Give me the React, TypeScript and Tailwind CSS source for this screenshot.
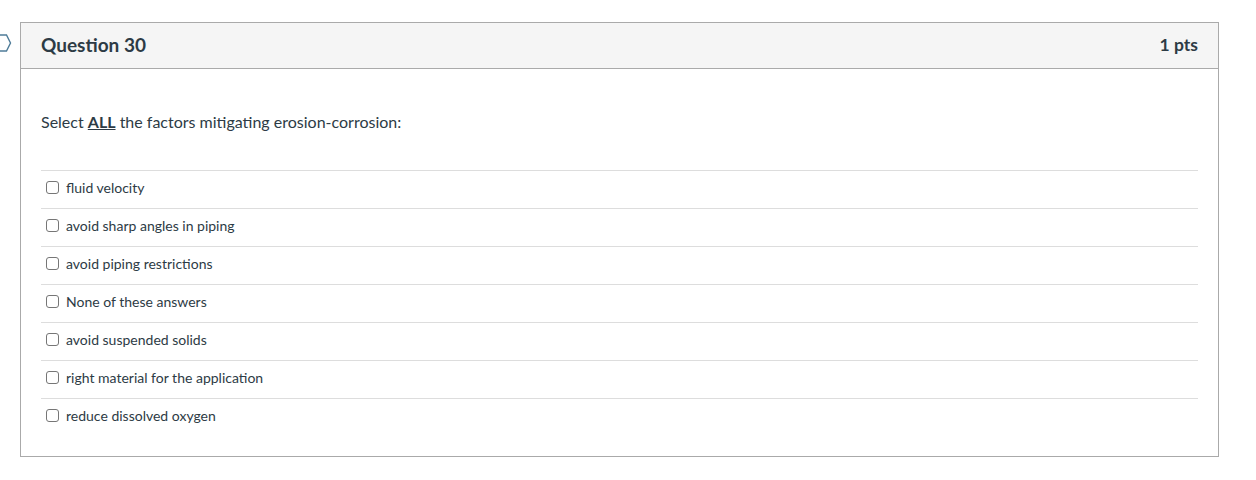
const answers = [
  'fluid velocity',
  'avoid sharp angles in piping',
  'avoid piping restrictions',
  'None of these answers',
  'avoid suspended solids',
  'right material for the application',
  'reduce dissolved oxygen',
];

export default function App() {
  return (
    <div className="min-h-[480px] bg-white text-[#2d3b45]" style={{ fontFamily: 'Lato, "Helvetica Neue", Arial, sans-serif' }}>
      <div className="flex pt-[22px]">
        {/* bookmark flag */}
        <div className="w-[20px] shrink-0 pt-[12px]">
          <svg width="12" height="18" viewBox="0 0 12 18" className="block">
            <path d="M-4 1 H6.5 L10.5 9 L6.5 17 H-4" fill="none" stroke="#4f7c99" strokeWidth="1.4" />
          </svg>
        </div>

        <div className="w-[1199px] border border-[#aaaaaa]">
          <div className="flex h-[46px] items-center justify-between border-b border-[#aaaaaa] bg-[#f5f5f5] pl-[20px] pr-[20px]">
            <h2 className="text-[19px] font-bold">Question 30</h2>
            <span className="text-[17.5px] font-bold">1 pts</span>
          </div>

          <div className="px-[20px] pt-[43px] pb-[20px]">
            <p className="text-[16px] leading-[20px]">
              Select <strong className="underline">ALL</strong> the factors mitigating erosion-corrosion:
            </p>

            <div className="mt-[38px]">
              {answers.map((a) => (
                <label key={a} className="flex h-[38px] items-center border-t border-[#dddddd] pb-[5px] pl-[5px]">
                  <span className="mr-[7px] h-[13px] w-[13px] rounded-[3px] border border-[#767676] bg-white" />
                  <span className="text-[14px]">{a}</span>
                </label>
              ))}
            </div>
          </div>
        </div>
      </div>
    </div>
  );
}
